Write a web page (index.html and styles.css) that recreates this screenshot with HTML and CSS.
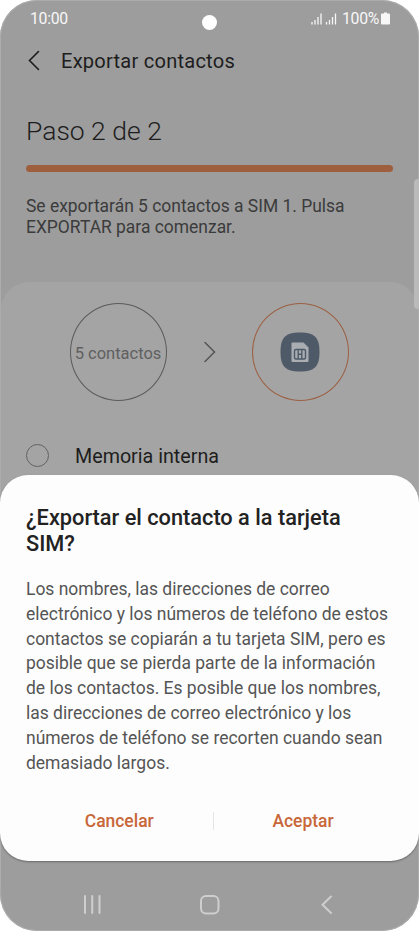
FILE: index.html
```html
<!DOCTYPE html>
<html lang="es">
<head>
<meta charset="utf-8">
<title>Exportar contactos</title>
<link rel="stylesheet" href="styles.css">
</head>
<body>
<div class="phone">
  <header class="status">
    <span class="time">10:00</span>
    <span class="camera"></span>
    <div class="indicators">
      <svg class="signals" width="26" height="12" viewBox="0 0 26 12"><path d="M1 9v2.500M4 7v4.500M7 4v7.500M10 .5v11M15.500 9v2.500M18.500 7v4.500M21.500 4v7.500M24.500 .5v11"/></svg>
      <span class="percent">100%</span>
      <svg class="battery" width="9" height="13" viewBox="0 0 9 13"><path d="M3 .5h3v1h2q1 0 1 1v9q0 1-1 1H1q-1 0-1-1v-9q0-1 1-1h2z"/></svg>
    </div>
  </header>
  <nav class="appbar">
    <svg class="back" width="14" height="22" viewBox="0 0 14 22"><path d="M11.500 1.500L2.500 10.500l9 9"/></svg>
    <h1>Exportar contactos</h1>
  </nav>
  <section class="step">
    <h2>Paso 2 de 2</h2>
    <div class="progress"></div>
    <p>Se exportarán 5 contactos a SIM 1. Pulsa<br>EXPORTAR para comenzar.</p>
  </section>
  <main class="card">
    <div class="transfer">
      <div class="circle"><span>5 contactos</span></div>
      <svg class="arrow" width="14" height="22" viewBox="0 0 14 22"><path d="M2 1.500l9.500 9.500L2 20.500"/></svg>
      <div class="circle target">
        <svg width="40" height="40" viewBox="0 0 40 40">
          <path class="tile" d="M20 .5C34.500.5 39.500 5.500 39.500 20S34.500 39.500 20 39.500.5 34.500.5 20 5.500.5 20 .5z"/>
          <path class="sim" d="M12.500 10.500h11l5 5v13.500q0 1-1 1H12.500q-1 0-1-1V11.500q0-1 1-1z"/>
          <path class="chip" d="M16 17.500h8q1.500 0 1.500 1.500v6.500q0 1.500-1.500 1.500h-8q-1.500 0-1.500-1.500v-6.500q0-1.500 1.500-1.500zM18.200 17.500v9.500M21.800 17.500v9.500M18.200 22.300h3.600"/>
        </svg>
      </div>
    </div>
    <div class="option"><span class="radio"></span><span>Memoria interna</span></div>
  </main>
  <span class="edge-handle"></span>
  <section class="dialog">
    <h3>¿Exportar el contacto a la tarjeta<br>SIM?</h3>
    <p>Los nombres, las direcciones de correo<br>electrónico y los números de teléfono de estos<br>contactos se copiarán a tu tarjeta SIM, pero es<br>posible que se pierda parte de la información<br>de los contactos. Es posible que los nombres,<br>las direcciones de correo electrónico y los<br>números de teléfono se recorten cuando sean<br>demasiado largos.</p>
    <div class="actions"><button>Cancelar</button><i></i><button>Aceptar</button></div>
  </section>
  <footer class="navbar">
    <svg width="20" height="20" viewBox="0 0 20 20"><path d="M3 1v17M10.200 1v17M17.500 1v17"/></svg>
    <svg width="20" height="20" viewBox="0 0 20 20"><rect x="1" y="1" width="17.500" height="17.500" rx="5"/></svg>
    <svg width="20" height="20" viewBox="0 0 20 20"><path d="M14 1.500L5.500 9.700l8.500 8.300"/></svg>
  </footer>
</div>
</body>
</html>
```
FILE: styles.css
```css
* { box-sizing: border-box; }
body { margin: 0; background: #fff; font-family: Roboto, sans-serif; }
h1, h2, h3, p { margin: 0; font-weight: 400; white-space: nowrap; }
svg { display: block; fill: none; flex: none; }
.phone {
  position: relative;
  display: flex;
  flex-direction: column;
  width: 419px;
  height: 931px;
  overflow: hidden;
  border-radius: 37px;
  background: #9d9d9d;
  box-shadow: inset 0 0 0 1px #acacac;
}
.status {
  display: grid;
  grid-template-columns: 1fr 15px 1fr;
  align-items: center;
  height: 37px;
  padding: 0 29px 0 30px;
  color: #f7f7f7;
  font-size: 15.8px;
}
.time { letter-spacing: -.3px; }
.camera { width: 15px; height: 15px; margin: 7px 0 0 -1px; border-radius: 50%; background: #fff; }
.indicators { display: flex; justify-content: flex-end; align-items: center; }
.signals { stroke: #f7f7f7; stroke-width: 1.3; margin-right: 5px; }
.percent { letter-spacing: -.3px; }
.battery { fill: #f7f7f7; margin-left: 2px; }
.appbar { display: flex; align-items: center; height: 48px; padding-left: 27px; color: #1d1d1d; }
.back { stroke: #1d1d1d; stroke-width: 1.6; stroke-linecap: round; margin-right: 20px; }
h1 { font-size: 20.1px; letter-spacing: .22px; }
.step { height: 197px; padding: 30px 26px 0 26px; color: #3b3b3b; }
h2 { font-size: 26.500px; line-height: 32px; font-weight: 300; color: #1d1d1d; }
.progress { height: 7px; margin-top: 18px; border-radius: 4px; background: #9e5f3f; }
.step p { margin-top: 24px; font-size: 17.450px; line-height: 21px; }
.card { height: 300px; margin: 0 1px; padding: 21px 25px 0; border-radius: 28px 28px 0 0; background: #a4a4a4; }
.transfer { display: flex; align-items: center; padding-left: 43.500px; }
.circle { display: flex; align-items: center; justify-content: center; width: 97px; height: 98px; border: 1px solid #5b5b5b; border-radius: 50%; color: #606060; font-size: 16.500px; white-space: nowrap; }
.circle span { padding-top: 2px; }
.arrow { margin: 0 35px 0 36.500px; stroke: #555; stroke-width: 1.5; stroke-linecap: round; }
.target { border-color: #9c6043; }
.target svg { margin-right: 1px; }
.tile { fill: #4e5a68; }
.sim { fill: #a9adb1; }
.chip { stroke: #4e5a68; stroke-width: 1.4; }
.option { display: flex; align-items: center; gap: 26px; height: 24px; margin-top: 42px; color: #1d1d1d; font-size: 19.700px; }
.option span:last-child { padding-top: 2px; }
.radio { width: 23px; height: 23px; border: 1px solid #626262; border-radius: 50%; }
.edge-handle { position: absolute; right: -4px; top: 179px; width: 9px; height: 130px; border-radius: 4px; background: #bababa; }
.dialog { position: absolute; left: 0; top: 475px; width: 419px; height: 386px; padding: 30px 26px 0; border-radius: 28px; background: #fdfdfd; box-shadow: 0 1px 2px #0005; }
h3 { font-size: 21.750px; line-height: 26px; font-weight: 500; color: #222; }
.dialog p { margin-top: 20px; color: #555; font-size: 17.480px; line-height: 24.8px; }
.actions { display: grid; grid-template-columns: 186.500px 1px 179px; align-items: center; margin-top: 34px; height: 24px; }
.actions button { border: 0; padding: 0; background: none; color: #c86739; font: 500 17.450px Roboto, sans-serif; }
.actions i { width: 1px; height: 18px; background: #e5e5e5; }
.navbar { display: flex; justify-content: space-between; padding: 34px 82px 0; height: 70px; margin-top: auto; }
.navbar svg { stroke: #cecece; stroke-width: 2; stroke-linecap: round; }
```
